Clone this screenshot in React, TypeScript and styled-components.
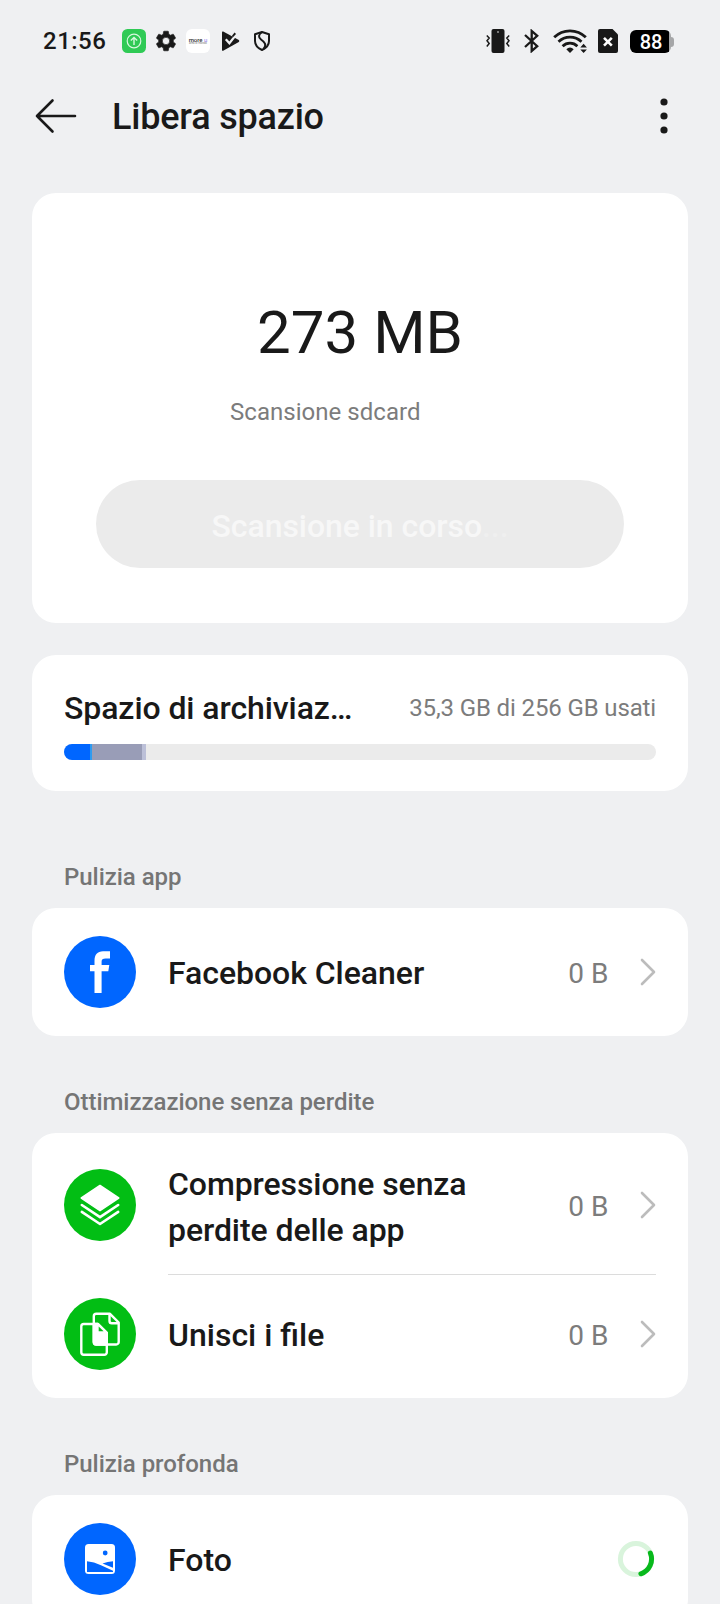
import React from "react";
import styled, { createGlobalStyle } from "styled-components";

const ink = "#191919";
const blue = "#0066ff";
const green = "#02be14";
const page = "#eff0f2";

const GlobalStyle = createGlobalStyle`
  * { box-sizing: border-box; }
  html, body { margin: 0; background: ${page}; }
  body {
    font-family: Roboto, "Liberation Sans", sans-serif;
    color: ${ink};
    overflow: hidden;
  }
  svg { display: block; flex: none; }
`;

const Screen = styled.main`
  width: 720px;
  height: 1604px;
  overflow: hidden;
  background: ${page};
`;

const StatusBar = styled.div`
  display: flex;
  justify-content: space-between;
  height: 82px;
  padding: 29px 46px 0 43px;
`;

const StatusGroup = styled.div<{ $gap?: number }>`
  display: flex;
  gap: ${(p) => p.$gap ?? 0}px;
  height: 24px;
`;

const Clock = styled.span`
  width: 71px;
  font-size: 24px;
  line-height: 24px;
  font-weight: 500;
  letter-spacing: 0.5px;
`;

const BrandTile = styled.span`
  display: flex;
  flex-direction: column;
  justify-content: center;
  align-items: center;
  width: 24px;
  height: 24px;
  border-radius: 6px;
  background: #fff;
  color: #333;
  font-weight: 500;
  font-size: 6px;
  line-height: 5px;
  white-space: nowrap;
  em { font-style: normal; color: #a79bf0; }
  small { font-size: 2.8px; line-height: 3px; font-weight: 400; color: #777; }
`;

const Spacer = styled.span<{ $w: number }>`
  width: ${(p) => p.$w}px;
`;

const Battery = styled.span`
  display: flex;
  align-items: center;
  width: 44px;
  height: 23px;
  margin-top: 1px;
`;

const BatteryBody = styled.span`
  width: 41px;
  height: 23px;
  border-radius: 6px;
  background: linear-gradient(90deg, #000 39px, #a5a6a8 39px);
  color: #fff;
  font-size: 20px;
  line-height: 24px;
  font-weight: 500;
  letter-spacing: -0.2px;
  text-align: center;
  padding-left: 1px;
`;

const BatteryTip = styled.span`
  width: 3px;
  height: 10px;
  border-radius: 0 3px 3px 0;
  background: #a5a6a8;
`;

const Header = styled.header`
  display: flex;
  align-items: center;
  height: 68px;
  padding: 0 52px 0 35px;
`;

const Title = styled.h1`
  flex: 1;
  margin: 2px 0 0 35px;
  font-size: 36px;
  line-height: 42px;
  font-weight: 500;
  letter-spacing: -0.2px;
`;

const Card = styled.section<{ $mt?: number }>`
  margin: ${(p) => p.$mt ?? 0}px 32px 0;
  border-radius: 24px;
  background: #fff;
`;

const ScanCard = styled(Card)`
  height: 430px;
  padding: 105px 64px 0;
`;

const Amount = styled.div`
  font-size: 60px;
  line-height: 70px;
  text-align: center;
`;

const ScanPath = styled.div`
  margin: 30px 0 0 134px;
  font-size: 24px;
  line-height: 28px;
  letter-spacing: 0.04px;
  color: #7c7c7c;
`;

const ScanButton = styled.button`
  display: block;
  width: 528px;
  height: 88px;
  margin-top: 54px;
  padding: 4px 0 0;
  border: 0;
  border-radius: 44px;
  background: #ebebeb;
  color: #f7f7f7;
  font: 500 32px/38px Roboto, sans-serif;
  letter-spacing: -0.06px;
  span { color: #efefef; }
`;

const StorageCard = styled(Card)`
  height: 136px;
  padding: 34px 32px 0;
`;

const StorageHead = styled.div`
  display: flex;
  align-items: flex-start;
  justify-content: space-between;
`;

const StorageTitle = styled.h2`
  margin: 0;
  white-space: nowrap;
  font-size: 32px;
  line-height: 38px;
  font-weight: 500;
  letter-spacing: -0.08px;
`;

const StorageUsed = styled.span`
  margin-top: 5px;
  font-size: 24px;
  line-height: 28px;
  letter-spacing: -0.13px;
  color: #7c7c7c;
  white-space: nowrap;
`;

const Meter = styled.div`
  display: flex;
  height: 16px;
  margin-top: 17px;
  border-radius: 8px;
  overflow: hidden;
  background: #ebebeb;
`;

const MeterPart = styled.span<{ $w: number; $color: string }>`
  width: ${(p) => p.$w}px;
  background: ${(p) => p.$color};
`;

const SectionLabel = styled.h3<{ $mt: number }>`
  margin: ${(p) => p.$mt}px 64px 0;
  font-size: 24px;
  line-height: 28px;
  font-weight: 500;
  letter-spacing: -0.04px;
  color: #757575;
`;

const Row = styled.div<{ $h: number; $pt?: number; $pb?: number }>`
  display: flex;
  align-items: center;
  height: ${(p) => p.$h}px;
  padding: ${(p) => p.$pt ?? 0}px 32px ${(p) => p.$pb ?? 0}px;
`;

const Disc = styled.span<{ $color: string }>`
  display: flex;
  flex: none;
  width: 72px;
  height: 72px;
  border-radius: 50%;
  background: ${(p) => p.$color};
`;

const RowTitle = styled.span<{ $mt?: number; $spacing?: number }>`
  flex: 1;
  margin: ${(p) => p.$mt ?? 2}px 40px 0 32px;
  font-size: 32px;
  line-height: 46px;
  font-weight: 500;
  letter-spacing: ${(p) => p.$spacing ?? 0}px;
`;

const RowValue = styled.span`
  margin: 4px 31.5px 0 0;
  font-size: 28px;
  line-height: 34px;
  color: #7c7c7c;
`;

const Divider = styled.div`
  height: 1px;
  margin: 0 32px 0 136px;
  background: #dcdcdc;
`;

const Chevron = () => (
  <svg width="16" height="28" viewBox="0 0 16 28" fill="none" stroke="#bcbcbc" strokeWidth="2.6" strokeLinecap="round" strokeLinejoin="round">
    <path d="M2 2 14 14 2 26" />
  </svg>
);

const FacebookMark = () => (
  <svg width="72" height="72" viewBox="0 0 72 72" fill="#fff">
    <path d="M30.5 57V35.200H26V29h4.500v-4.200c0-6.200 3-9.600 8.500-9.600h7v7.300h-4.300c-3 0-4.100.8-4.100 3.200V29h7.700l-1 6.200h-6.700V57z" />
  </svg>
);

const LayersMark = () => (
  <svg width="72" height="72" viewBox="0 0 72 72" fill="none" stroke="#fff" strokeLinecap="round" strokeLinejoin="round">
    <path d="M36 16.5 54.7 29 36 41.7 17.3 29z" fill="#fff" strokeWidth="1.6" />
    <path d="M17.8 36 36 48.2 54.2 36M17.8 42.9 36 55 54.2 42.9" strokeWidth="2.6" />
  </svg>
);

const MergeMark = () => (
  <svg width="72" height="72" viewBox="0 0 72 72" fill="none" stroke="#fff" strokeWidth="2.4" strokeLinejoin="round">
    <path d="M32.3 15.8H46l8.700 8.700V44a2.500 2.500 0 0 1-2.500 2.500H32.300a2.500 2.500 0 0 1-2.500-2.500V18.300a2.500 2.500 0 0 1 2.500-2.500z" />
    <path d="M45.500 16.300V23a2.300 2.300 0 0 0 2.300 2.300h6.500" />
    <path d="M19.800 26H34l8.800 8.800v19.500a2.500 2.500 0 0 1-2.500 2.500H19.800a2.500 2.500 0 0 1-2.500-2.500V28.500a2.500 2.500 0 0 1 2.500-2.500z" />
    <path d="M29.800 26H34l8.800 8.800v11.700H32.300a2.500 2.500 0 0 1-2.500-2.500z" fill="#fff" />
    <path d="M34.700 28.600v4.600h4.900z" fill={green} stroke="none" />
  </svg>
);

const PhotoMark = () => (
  <svg width="72" height="72" viewBox="0 0 72 72">
    <rect x="21" y="21" width="30" height="30" rx="3.5" fill="#fff" />
    <circle cx="41.2" cy="30" r="2.4" fill={blue} />
    <path d="M23 38.200q7 .3 14 4.100l12 5.400V49H23z" fill={blue} />
    <path d="M38.500 40.500q5-1.900 10.500-2.300v6.600z" fill={blue} />
  </svg>
);

const Spinner = () => (
  <svg width="40" height="40" viewBox="0 0 40 40" fill="none" strokeWidth="5">
    <circle cx="20" cy="20" r="15.6" stroke="#d9f4dc" />
    <path d="M34.400 14.100A15.600 15.600 0 0 1 24.900 34.800" stroke="#08b91c" strokeLinecap="round" />
  </svg>
);

const UploadTile = () => (
  <svg width="24" height="24" viewBox="0 0 24 24" fill="none" stroke="#d8f8df">
    <rect width="24" height="24" rx="5.5" fill="#2fca55" stroke="none" />
    <circle cx="12" cy="12" r="6.8" strokeWidth="1.2" />
    <path d="M12 16V8.700M8.800 11.600 12 8.500l3.200 3.100" strokeWidth="1.4" />
  </svg>
);

const Gear = () => (
  <svg width="24" height="24" viewBox="0 0 24 24">
    <path
      fill={ink}
      stroke={ink}
      strokeWidth=".6"
      transform="translate(12 12) scale(1.02) translate(-12 -12)"
      d="M19.14 12.94c.04-.3.06-.61.06-.94 0-.32-.02-.64-.07-.94l2.03-1.58c.18-.14.23-.41.12-.61l-1.92-3.32c-.12-.22-.37-.29-.59-.22l-2.39.96c-.5-.38-1.03-.7-1.62-.94l-.36-2.54c-.04-.24-.24-.41-.48-.41h-3.84c-.24 0-.43.17-.47.41l-.36 2.54c-.59.24-1.13.57-1.62.94l-2.39-.96c-.22-.08-.47 0-.59.22L2.74 8.87c-.12.21-.08.47.12.61l2.03 1.58c-.05.3-.09.63-.09.94s.02.64.07.94l-2.03 1.58c-.18.14-.23.41-.12.61l1.92 3.32c.12.22.37.29.59.22l2.39-.96c.5.38 1.03.7 1.62.94l.36 2.54c.05.24.24.41.48.41h3.84c.24 0 .44-.17.47-.41l.36-2.54c.59-.24 1.13-.56 1.62-.94l2.39.96c.22.08.47 0 .59-.22l1.92-3.32c.12-.22.07-.47-.12-.61zM12 15.6A3.6 3.6 0 1 1 12 8.4a3.6 3.6 0 0 1 0 7.2z"
    />
  </svg>
);

const PlayCheck = () => (
  <svg width="24" height="24" viewBox="0 0 24 24">
    <path d="M4 3.200q0-1.200 1.200-.6L20.800 11q1 1 0 2L5.200 21.700Q4 22.200 4 21z" fill={ink} />
    <path d="m7.800 10.200 3.600 4L18.200 5.600" fill="none" stroke={page} strokeWidth="2.3" />
    <path d="M14 6.800 16.600 3.600 18 5 14.700 8.600z" fill={ink} />
  </svg>
);

const Shield = () => (
  <svg width="24" height="24" viewBox="0 0 24 24" fill="none" stroke={ink} strokeWidth="2" strokeLinejoin="round">
    <path d="M12 3 5 5.300V12c0 4 2.600 7 7 9 4.400-2 7-5 7-9V5.300z" />
    <path d="M12.300 3C8 5.500 8.300 8.500 11 10.500c3.600 2.600 6.200 5 2.500 9.700" />
  </svg>
);

const Vibrate = () => (
  <svg width="24" height="24" viewBox="0 0 24 24" fill="none" stroke={ink} strokeWidth="1.5">
    <rect x="5.500" y="0" width="13" height="24" rx="2" fill={ink} stroke="none" />
    <circle cx="12" cy="3" r="1" fill="#999" stroke="none" />
    <path d="M.8 6.500 3.200 9 1 11.800 3.200 14.500.8 17.500M23.200 6.500 20.800 9 23 11.800 20.800 14.500 23.200 17.500" />
  </svg>
);

const Bluetooth = () => (
  <svg width="24" height="24" viewBox="0 0 24 24" fill="none" stroke={ink} strokeWidth="2.3">
    <path d="M5 6 17.200 17.200 11.700 22V2L17.200 6.800 5 18" />
  </svg>
);

const Wifi = () => (
  <svg width="34" height="24" viewBox="0 0 34 24" fill="none" stroke={ink} strokeWidth="2.8">
    <path d="M1.200 8.300a22.500 22.500 0 0 1 31.600 0M5.500 12.800a16.500 16.500 0 0 1 23 0M9.600 17.200a10.500 10.500 0 0 1 14.800 0" />
    <path d="M13.300 20.200q3.700-3.300 7.400 0L17 24z" fill={ink} stroke="none" />
    <path d="M25.500 15h8.500v9h-8.500z" fill={page} stroke="none" />
    <path d="M27.300 18.600 30.600 14.800 33.900 18.600zM27.300 20.500 30.600 24 33.900 20.500z" fill={ink} stroke="none" />
  </svg>
);

const SimOff = () => (
  <svg width="20" height="24" viewBox="0 0 20 24">
    <path d="M2 0h12.500L20 5.500V22a2 2 0 0 1-2 2H2a2 2 0 0 1-2-2V2a2 2 0 0 1 2-2z" fill={ink} />
    <path d="M6 8.800 13.800 16.600M13.800 8.800 6 16.600" stroke="#fff" strokeWidth="2.6" />
  </svg>
);

const BackArrow = () => (
  <svg width="42" height="36" viewBox="0 0 42 36" fill="none" stroke={ink} strokeWidth="2.6" strokeLinecap="round" strokeLinejoin="round">
    <path d="M17.500 2.500 2 18 17.500 33.500M2 18H40" />
  </svg>
);

const MoreDots = () => (
  <svg width="8" height="36" viewBox="0 0 8 36" fill={ink}>
    <circle cx="4" cy="4" r="3.6" />
    <circle cx="4" cy="18" r="3.6" />
    <circle cx="4" cy="32" r="3.6" />
  </svg>
);

export default function App() {
  return (
    <>
      <GlobalStyle />
      <Screen>
        <StatusBar>
          <StatusGroup $gap={8}>
            <Clock>21:56</Clock>
            <UploadTile />
            <Gear />
            <BrandTile>
              <span>more <em>u</em></span>
              <small>area di mondo</small>
            </BrandTile>
            <PlayCheck />
            <Shield />
          </StatusGroup>
          <StatusGroup>
            <Vibrate />
            <Spacer $w={10} />
            <Bluetooth />
            <Spacer $w={9} />
            <Wifi />
            <Spacer $w={11} />
            <SimOff />
            <Spacer $w={12} />
            <Battery>
              <BatteryBody>88</BatteryBody>
              <BatteryTip />
            </Battery>
          </StatusGroup>
        </StatusBar>

        <Header>
          <BackArrow />
          <Title>Libera spazio</Title>
          <MoreDots />
        </Header>

        <ScanCard $mt={43}>
          <Amount>273 MB</Amount>
          <ScanPath>Scansione sdcard</ScanPath>
          <ScanButton>
            Scansione in corso<span>...</span>
          </ScanButton>
        </ScanCard>

        <StorageCard $mt={32}>
          <StorageHead>
            <StorageTitle>Spazio di archiviaz…</StorageTitle>
            <StorageUsed>35,3 GB di 256 GB usati</StorageUsed>
          </StorageHead>
          <Meter>
            <MeterPart $w={26} $color={blue} />
            <MeterPart $w={2} $color="#2f9bf0" />
            <MeterPart $w={50} $color="#999db7" />
            <MeterPart $w={4} $color="#bcc0d8" />
          </Meter>
        </StorageCard>

        <SectionLabel $mt={72}>Pulizia app</SectionLabel>
        <Card $mt={17}>
          <Row $h={128}>
            <Disc $color={blue}><FacebookMark /></Disc>
            <RowTitle $spacing={-0.04}>Facebook Cleaner</RowTitle>
            <RowValue>0 B</RowValue>
            <Chevron />
          </Row>
        </Card>

        <SectionLabel $mt={52}>Ottimizzazione senza perdite</SectionLabel>
        <Card $mt={17}>
          <Row $h={141} $pt={3}>
            <Disc $color={green}><LayersMark /></Disc>
            <RowTitle $mt={4} $spacing={-0.08}>Compressione senza perdite delle app</RowTitle>
            <RowValue>0 B</RowValue>
            <Chevron />
          </Row>
          <Divider />
          <Row $h={123} $pb={5}>
            <Disc $color={green}><MergeMark /></Disc>
            <RowTitle>Unisci i file</RowTitle>
            <RowValue>0 B</RowValue>
            <Chevron />
          </Row>
        </Card>

        <SectionLabel $mt={52}>Pulizia profonda</SectionLabel>
        <Card $mt={17}>
          <Row $h={128}>
            <Disc $color={blue}><PhotoMark /></Disc>
            <RowTitle>Foto</RowTitle>
            <Spinner />
          </Row>
        </Card>
      </Screen>
    </>
  );
}
